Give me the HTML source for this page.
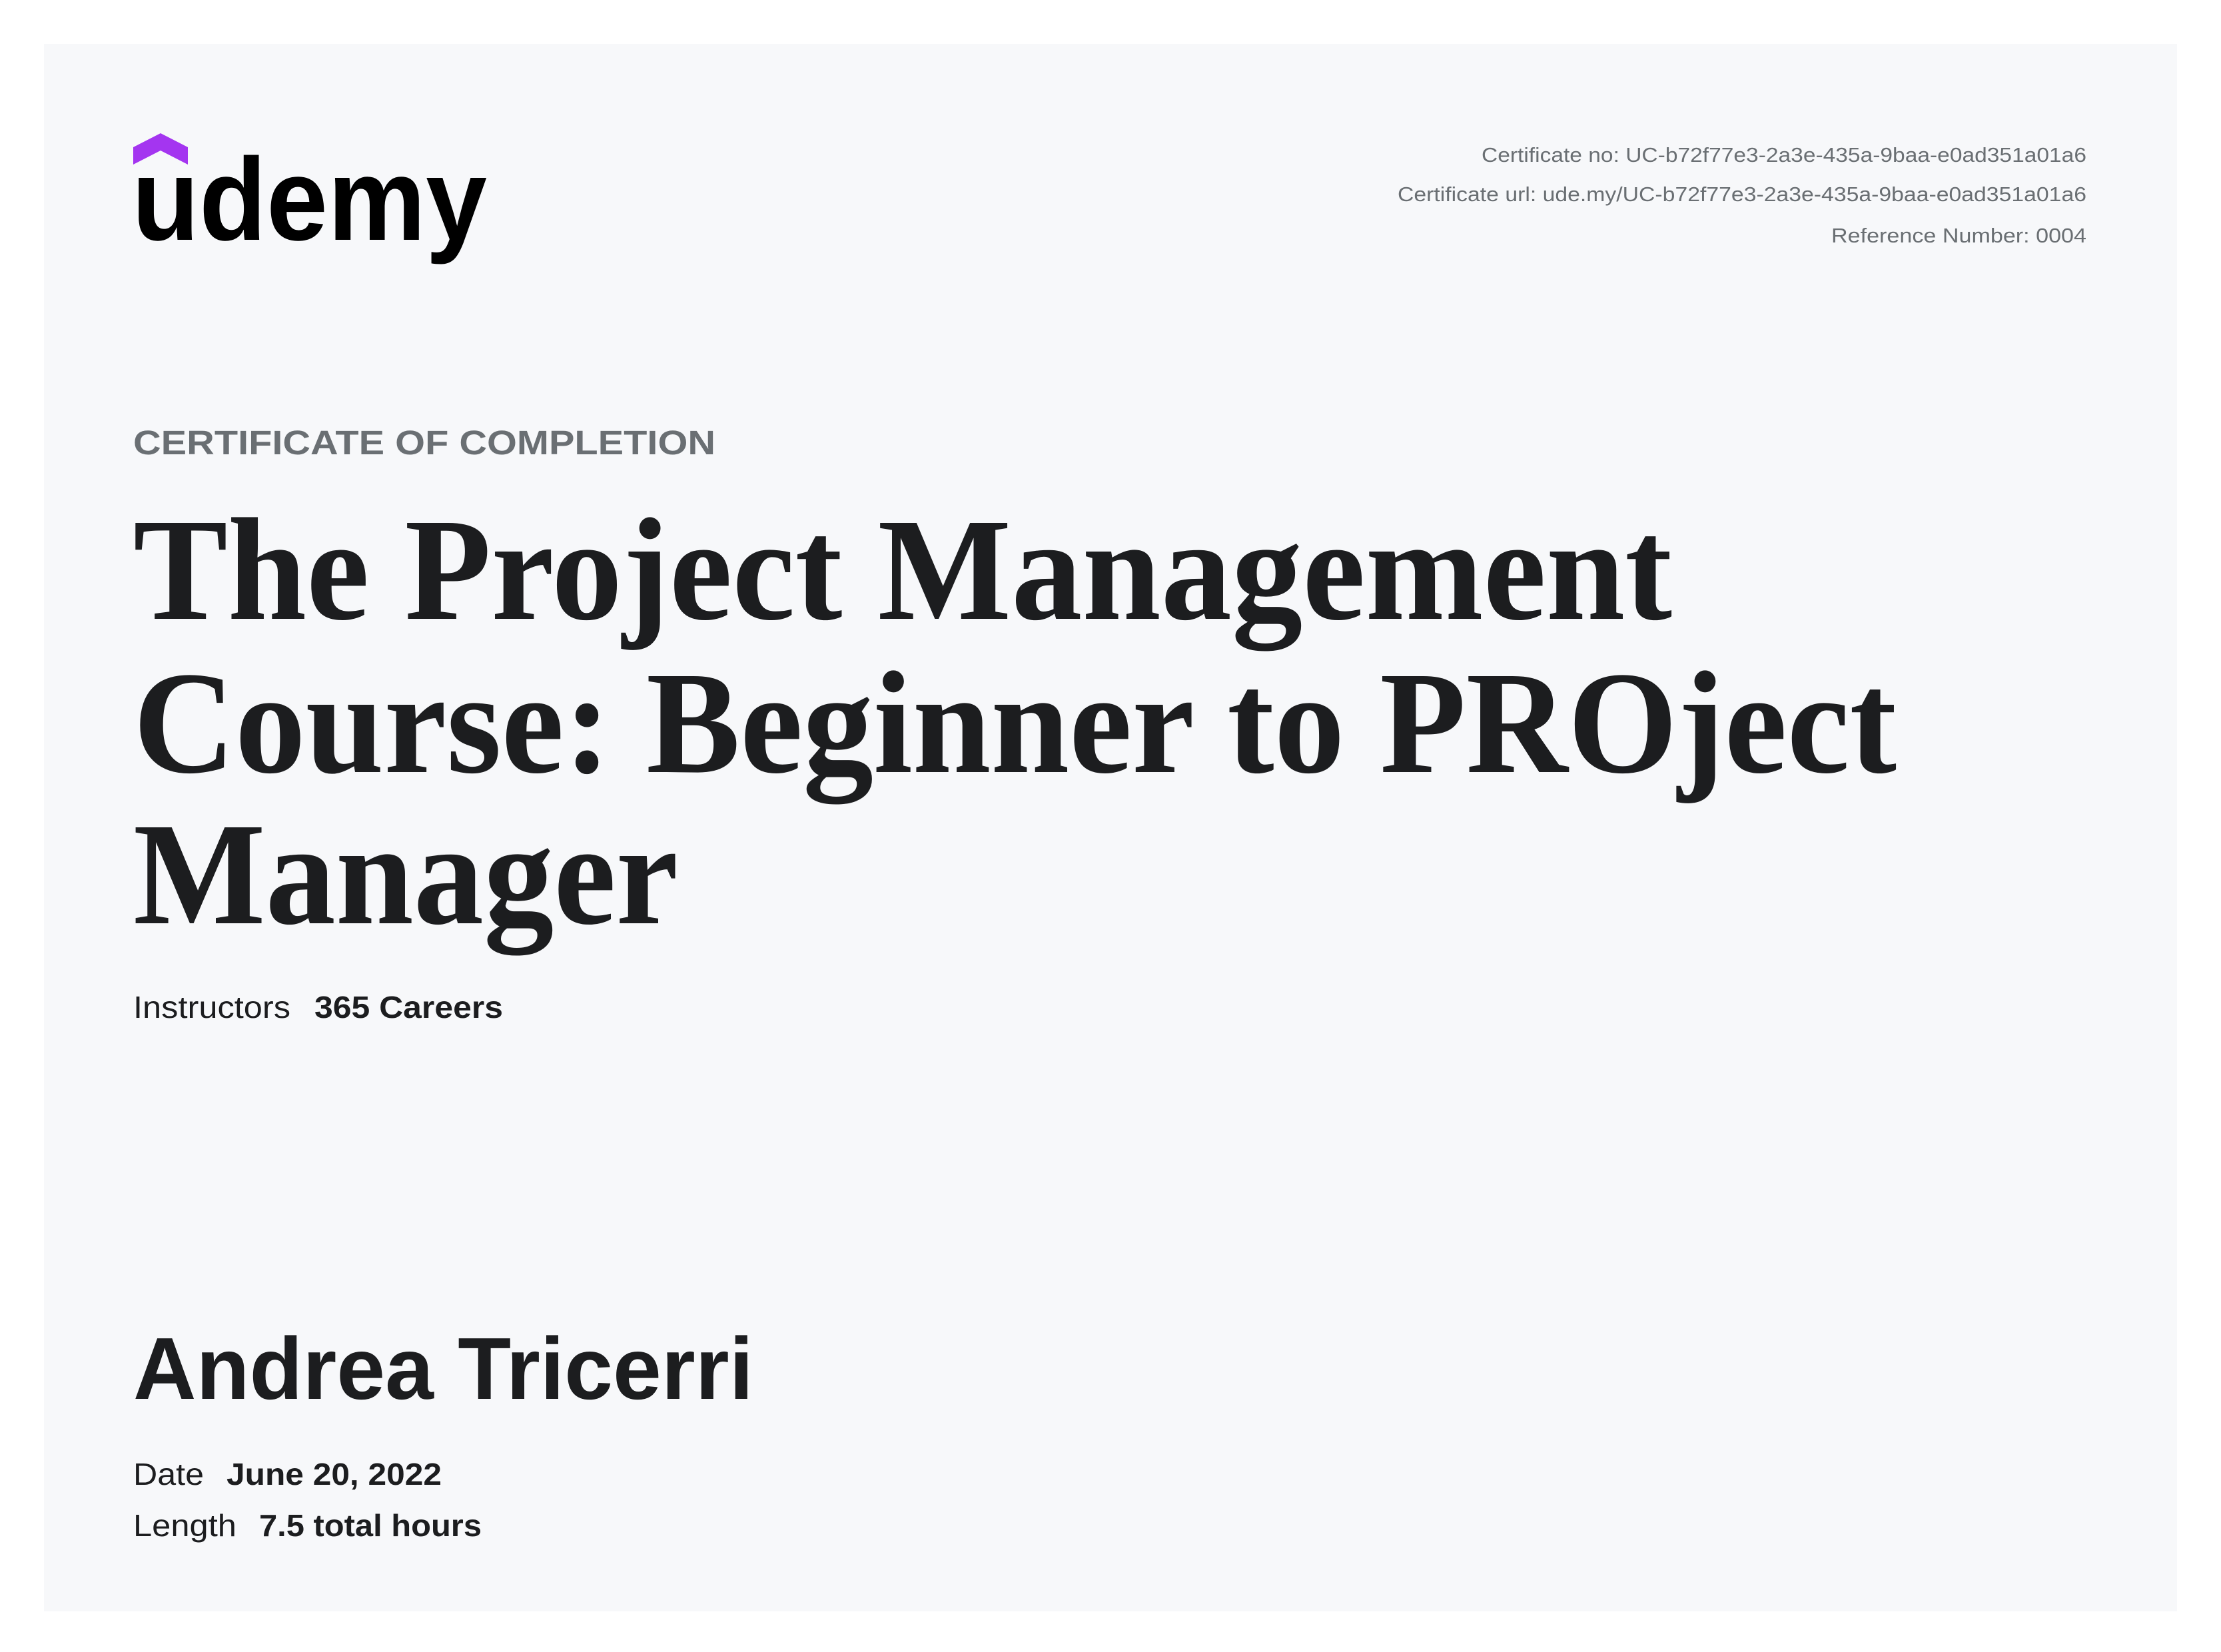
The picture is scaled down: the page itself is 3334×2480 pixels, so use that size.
<!DOCTYPE html>
<html><head><meta charset="utf-8"><style>
html,body{margin:0;padding:0;background:#fff;}
svg{display:block;}
</style></head><body>
<svg width="3334" height="2480" viewBox="0 0 3334 2480" xmlns="http://www.w3.org/2000/svg">
<rect x="0" y="0" width="3334" height="2480" fill="#ffffff"/>
<rect x="66" y="66" width="3202" height="2353" fill="#f7f8fa"/>
<polygon points="200,221 241,200 282,221 282,247 241,226 200,247" fill="#a435f0"/>
<text x="198" y="360" font-family="Liberation Sans, sans-serif" font-weight="bold" font-size="176" fill="#000" textLength="533" lengthAdjust="spacingAndGlyphs">udemy</text>
<g font-family="Liberation Sans, sans-serif" font-size="31" fill="#6a6f73" text-anchor="end">
<text x="3132" y="243" textLength="908" lengthAdjust="spacingAndGlyphs">Certificate no: UC-b72f77e3-2a3e-435a-9baa-e0ad351a01a6</text>
<text x="3132" y="302" textLength="1034" lengthAdjust="spacingAndGlyphs">Certificate url: ude.my/UC-b72f77e3-2a3e-435a-9baa-e0ad351a01a6</text>
<text x="3132" y="364" textLength="383" lengthAdjust="spacingAndGlyphs">Reference Number: 0004</text>
</g>
<text x="200" y="682" font-family="Liberation Sans, sans-serif" font-weight="bold" font-size="51" fill="#6a6f73" textLength="874" lengthAdjust="spacingAndGlyphs">CERTIFICATE OF COMPLETION</text>
<g font-family="Liberation Serif, serif" font-weight="bold" font-size="220" fill="#1c1d1f">
<text x="200" y="929" textLength="2310" lengthAdjust="spacingAndGlyphs">The Project Management</text>
<text x="200" y="1159" textLength="2647" lengthAdjust="spacingAndGlyphs">Course: Beginner to PROject</text>
<text x="200" y="1386" textLength="818" lengthAdjust="spacingAndGlyphs">Manager</text>
</g>
<g font-family="Liberation Sans, sans-serif" font-size="46" fill="#1c1d1f">
<text x="200" y="1528" textLength="236" lengthAdjust="spacingAndGlyphs">Instructors</text>
<text x="472" y="1528" font-weight="bold" textLength="283" lengthAdjust="spacingAndGlyphs">365 Careers</text>
<text x="200" y="2229" textLength="106" lengthAdjust="spacingAndGlyphs">Date</text>
<text x="340" y="2229" font-weight="bold" textLength="323" lengthAdjust="spacingAndGlyphs">June 20, 2022</text>
<text x="200" y="2306" textLength="155" lengthAdjust="spacingAndGlyphs">Length</text>
<text x="389" y="2306" font-weight="bold" textLength="334" lengthAdjust="spacingAndGlyphs">7.5 total hours</text>
</g>
<text x="200" y="2100" font-family="Liberation Sans, sans-serif" font-weight="bold" font-size="132" fill="#1c1d1f" textLength="931" lengthAdjust="spacingAndGlyphs">Andrea Tricerri</text>
</svg>
</body></html>
